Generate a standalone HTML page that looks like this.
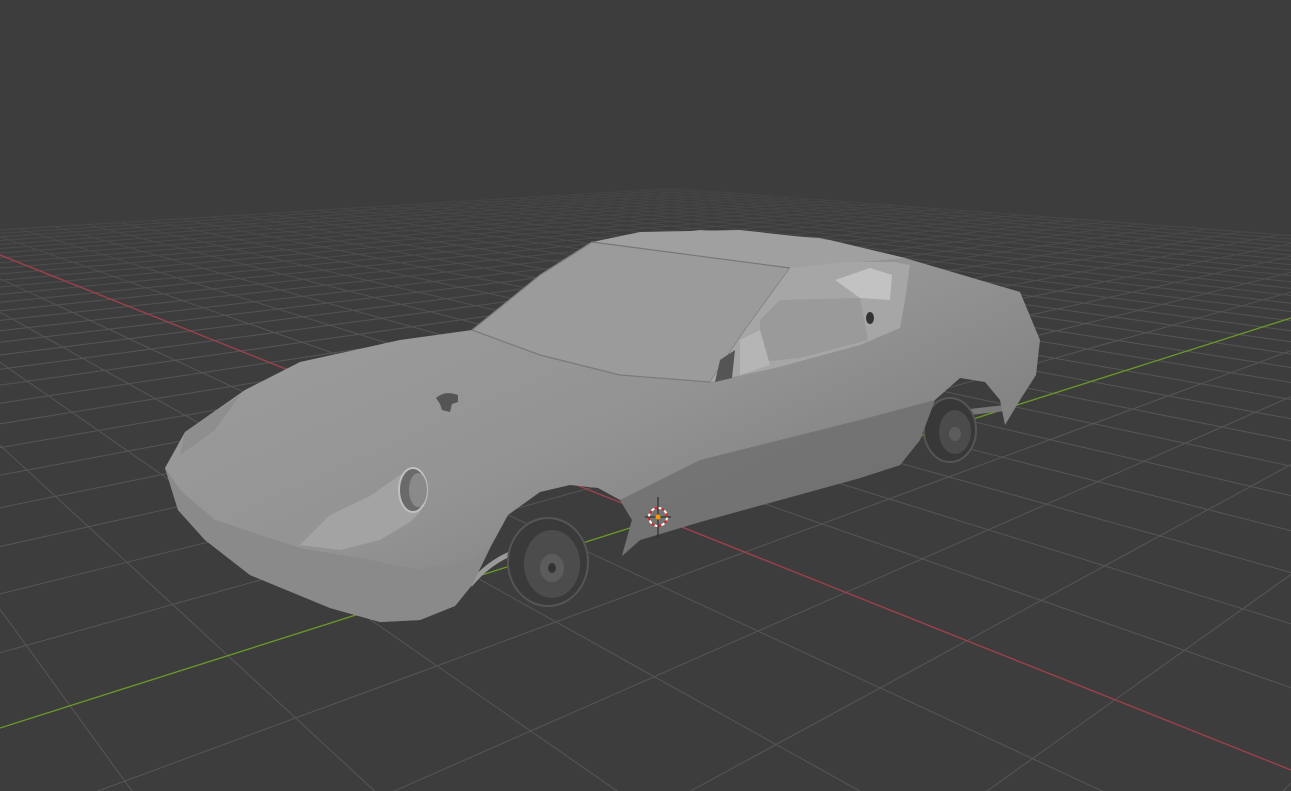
<!DOCTYPE html>
<html><head><meta charset="utf-8"><style>
html,body{margin:0;padding:0;background:#3d3d3d;overflow:hidden;width:1291px;height:791px}
svg{display:block;position:absolute;left:0;top:0}
</style></head><body>
<svg id="s" width="1291" height="791" viewBox="0 0 1291 791" xmlns="http://www.w3.org/2000/svg">
<defs>
<linearGradient id="bd" x1="0" y1="0" x2="1" y2="1">
<stop offset="0" stop-color="#a0a0a0"/><stop offset="0.5" stop-color="#939393"/><stop offset="1" stop-color="#6e6e6e"/>
</linearGradient>
<linearGradient id="fade" gradientUnits="userSpaceOnUse" x1="0" y1="140" x2="0" y2="330">
<stop offset="0" stop-color="#000"/><stop offset="1" stop-color="#fff"/>
</linearGradient>
<mask id="gm" maskUnits="userSpaceOnUse" x="0" y="0" width="1291" height="791">
<rect width="1291" height="791" fill="url(#fade)"/>
</mask>
</defs>
<rect width="1291" height="791" fill="#3d3d3d"/>
<g id="grid" mask="url(#gm)"></g>
<line x1="0" y1="255" x2="1291" y2="770" stroke="#a3404e" stroke-width="1.3"/>
<line x1="0" y1="728" x2="1291" y2="318" stroke="#6b9a2a" stroke-width="1.3"/>
<g>
<path d="M470 585 Q490 560 520 550" stroke="#9a9a9a" stroke-width="5" fill="none"/>
<ellipse cx="548" cy="562" rx="40" ry="44" fill="#3a3a3a" stroke="#555" stroke-width="2"/>
<ellipse cx="552" cy="564" rx="28" ry="34" fill="#4c4c4c"/>
<ellipse cx="552" cy="568" rx="12" ry="14" fill="#5c5c5c"/>
<ellipse cx="552" cy="568" rx="4" ry="5" fill="#333"/>
<path d="M970 412 L1005 408" stroke="#777" stroke-width="6"/>
<ellipse cx="950" cy="430" rx="26" ry="32" fill="#383838" stroke="#555" stroke-width="2"/>
<ellipse cx="955" cy="432" rx="16" ry="22" fill="#4b4b4b"/>
<ellipse cx="955" cy="434" rx="6" ry="7" fill="#5c5c5c"/>
</g>
<path d="M165 468 L185 432 L245 390 L300 362 L400 340 L472 330 L540 275 L592 242 L700 230 L820 238 L905 258 L1020 292 L1040 340 L1036 375 L1020 400 L1005 425 L1000 400 L985 382 L960 378 L935 400 L920 440 L900 465 L860 478 L700 522 L640 540 L622 556 L632 520 L620 500 L598 488 L570 485 L540 492 L508 515 L490 548 L472 585 L455 606 L420 620 L380 622 L330 608 L250 575 L205 540 L178 510 Z" fill="url(#bd)"/>
<path d="M620 500 L700 460 L860 420 L935 400 L920 440 L900 465 L860 478 L700 522 L640 540 L622 556 L632 520 Z" fill="#6e6e6e" opacity="0.8"/>
<path d="M165 468 L178 510 L205 540 L250 575 L330 608 L380 622 L420 620 L455 606 L472 585 L490 548 L470 560 L420 570 L370 560 L300 548 L215 520 L180 490 Z" fill="#8a8a8a"/>
<path d="M472 330 L540 275 L592 242 L700 252 L790 268 L745 330 L710 382 L620 375 L540 355 Z" fill="#9b9b9b" stroke="#7a7a7a" stroke-width="1.2"/>
<path d="M592 242 L640 232 L740 230 L830 240 L905 258 L790 268 Z" fill="#a0a0a0"/>
<path d="M592 242 L790 268" stroke="#777" stroke-width="1.2"/>
<path d="M790 268 L845 262 L895 262 L910 265 L905 300 L900 328 L860 345 L775 368 L710 382 L745 330 Z" fill="#a6a6a6"/>
<path d="M760 320 L780 300 L860 298 L868 340 L800 358 L760 362 Z" fill="#9a9a9a"/>
<path d="M740 340 L760 330 L770 365 L740 375 Z" fill="#b5b5b5"/>
<path d="M835 280 L870 268 L892 275 L890 300 L860 298 Z" fill="#c2c2c2"/>
<ellipse cx="870" cy="318" rx="4" ry="6" fill="#333"/>
<path d="M720 360 L735 350 L732 378 L715 382 Z" fill="#555"/>
<path d="M436 398 Q445 390 458 395 L458 402 L452 404 L450 412 L442 410 L440 404 Z" fill="#555"/>
<path d="M300 545 L330 515 L370 496 L400 475 L418 470 L428 490 L420 512 L410 522 L380 540 L340 550 Z" fill="#a3a3a3"/>
<ellipse cx="413" cy="490" rx="14" ry="22" fill="#6a6a6a" stroke="#c0c0c0" stroke-width="2"/>
<ellipse cx="418" cy="490" rx="9" ry="17" fill="#8a8a8a"/>
<path d="M185 432 L240 395 L215 430 L180 455 Z" fill="#8e8e8e"/>
<g>
<circle cx="658" cy="517" r="9" fill="none" stroke="#fff" stroke-width="2" stroke-dasharray="4 3"/>
<circle cx="658" cy="517" r="9" fill="none" stroke="#d22" stroke-width="2" stroke-dasharray="3 4" stroke-dashoffset="3.5"/>
<line x1="658" y1="497" x2="658" y2="537" stroke="#222" stroke-width="1"/>
<line x1="645" y1="517" x2="671" y2="517" stroke="#222" stroke-width="1"/>
<circle cx="658" cy="517" r="2.5" fill="#f90"/>
</g>
</svg>
<script>
(function(){
var g=document.getElementById('grid');
var O=[660,518],VR=[-363,110],VG=[1943,110],a=-0.077,b=0.063;
function proj(u,v){
 var w=1+u*a+v*b;
 var X=(O[0]+u*a*VR[0]+v*b*VG[0]),Y=(O[1]+u*a*VR[1]+v*b*VG[1]);
 return [X/w,Y/w,w];
}
var s='',N=30;
for(var i=-N;i<=N;i++){for(var j=-N;j<N;j++){
 if(i===0)continue;
 var segs=[[i,j,i,j+1],[j,i,j+1,i]];
 for(var k=0;k<2;k++){var q=segs[k];
  var p1=proj(q[0],q[1]),p2=proj(q[2],q[3]);
  if(p1[2]<0.25||p2[2]<0.25)continue;
  if((p1[0]<-50&&p2[0]<-50)||(p1[0]>1340&&p2[0]>1340)||(p1[1]>840&&p2[1]>840)||(p1[1]<-50&&p2[1]<-50))continue;
  s+='<line x1="'+p1[0].toFixed(1)+'" y1="'+p1[1].toFixed(1)+'" x2="'+p2[0].toFixed(1)+'" y2="'+p2[1].toFixed(1)+'" stroke="#565656"/>';
 }}}
g.innerHTML=s;
})();
</script>
</body></html>
